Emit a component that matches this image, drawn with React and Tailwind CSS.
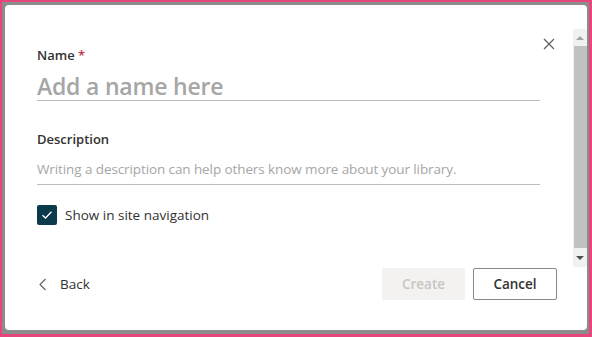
export default function App() {
  return (
    <div
      className="w-[592px] h-[337px] bg-[#e8457c] pt-[2px] pl-[2px] pr-[3px] pb-[3px]"
      style={{ fontFamily: '"Open Sans", "Noto Sans", sans-serif' }}
    >
      <div className="w-full h-full bg-[#8c8c8c] pt-[3px] pl-[3px] pr-[2px] pb-[4px]">
        <div className="w-full h-full bg-white rounded-[4px] flex flex-col">
          {/* scroll area */}
          <div className="mt-[24px] h-[238px] flex">
            <div className="relative flex-1 pl-[32px] pr-[33px] pt-[17px]">
              <button className="absolute right-[17px] top-[8px] w-[14px] h-[14px] flex items-center justify-center text-[#605e5c]">
                <svg width="12" height="12" viewBox="0 0 12 12" fill="none" stroke="currentColor" strokeWidth="1.2">
                  <path d="M1 1 L11 11 M11 1 L1 11" />
                </svg>
              </button>

              <div className="text-[13px] leading-[18px] font-semibold text-[#323130]">
                Name <span className="text-[#c4314b]">*</span>
              </div>
              <div className="mt-[3px] border-b border-[#bdbdbd] h-[34px] flex items-end">
                <span className="text-[23px] leading-[27px] font-semibold text-[#a6a6a6] tracking-[-0.2px]">
                  Add a name here
                </span>
              </div>

              <div className="mt-[29px] text-[13px] leading-[18px] font-semibold text-[#323130]">
                Description
              </div>
              <div className="mt-[8px] border-b border-[#bdbdbd] h-[29px] flex items-center pb-[3px]">
                <span className="text-[13.5px] leading-[18px] text-[#a6a6a6] tracking-[-0.1px]">
                  Writing a description can help others know more about your library.
                </span>
              </div>

              <div className="mt-[20px] flex items-center gap-[8px]">
                <div className="w-[20px] h-[20px] rounded-[2px] bg-[#0b3a4a] flex items-center justify-center">
                  <svg width="12" height="10" viewBox="0 0 12 10" fill="none" stroke="white" strokeWidth="1.3">
                    <path d="M1.5 5.2 L4.5 8 L10.5 1.8" />
                  </svg>
                </div>
                <span className="text-[13.5px] leading-[18px] text-[#323130]">Show in site navigation</span>
              </div>
            </div>

            {/* scrollbar */}
            <div className="w-[14px] h-full bg-[#f1f1f1] flex flex-col items-center">
              <div className="h-[17px] flex items-center justify-center">
                <div className="w-0 h-0 border-l-[4px] border-r-[4px] border-b-[4px] border-l-transparent border-r-transparent border-b-[#a3a3a3]" />
              </div>
              <div className="w-[13px] h-[202px] bg-[#c1c1c1]" />
              <div className="flex-1 flex items-center justify-center">
                <div className="w-0 h-0 border-l-[4px] border-r-[4px] border-t-[4px] border-l-transparent border-r-transparent border-t-[#505050]" />
              </div>
            </div>
          </div>

          {/* footer */}
          <div className="mt-[1px] flex items-center pl-[34px] pr-[30px] h-[32px]">
            <button className="flex items-center gap-[13px] text-[#323130]">
              <svg width="8" height="13" viewBox="0 0 8 13" fill="none" stroke="#605e5c" strokeWidth="1.1">
                <path d="M6.5 1 L1 6.5 L6.5 12" />
              </svg>
              <span className="text-[13.5px] leading-[18px]">Back</span>
            </button>
            <div className="ml-auto flex gap-[8px]">
              <button className="w-[83px] h-[32px] rounded-[2px] bg-[#f3f2f1] text-[#c8c6c4] text-[13.5px] font-semibold">
                Create
              </button>
              <button className="w-[84px] h-[32px] rounded-[2px] border border-[#8a8886] bg-white text-[#323130] text-[13.5px] font-semibold">
                Cancel
              </button>
            </div>
          </div>
        </div>
      </div>
    </div>
  );
}
